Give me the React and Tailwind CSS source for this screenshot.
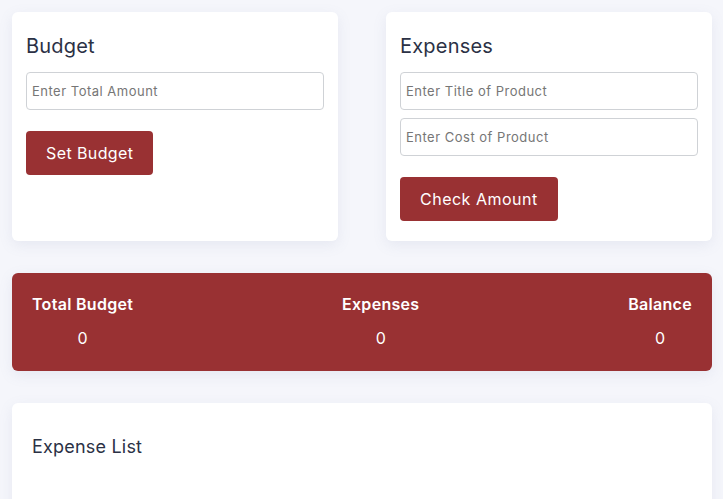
export default function App() {
  const font = { fontFamily: '"Inter", "Noto Sans", sans-serif' };
  const inputCls =
    "block h-[38px] w-full rounded-[4px] border border-[#cfd2d6] px-[5px] text-[13px] tracking-[0.5px] text-[#333] placeholder:text-[#767676] outline-none";
  return (
    <div className="h-[499px] overflow-hidden bg-[#f5f6fb] pl-3 pr-[11px] pt-3" style={font}>
      <div className="grid grid-cols-2 gap-12">
        <div className="rounded-md bg-white px-[14px] pt-5 pb-5 shadow-[0_4px_14px_rgba(120,130,170,0.12)]">
          <h2 className="mb-3 text-[20px] leading-7 tracking-[0.2px] text-[#2b3145]">Budget</h2>
          <input className={inputCls} placeholder="Enter Total Amount" />
          <button className="mt-[21px] rounded-[4px] bg-[#993133] px-5 py-2.5 text-[16px] leading-6 tracking-[0.4px] text-white">
            Set Budget
          </button>
        </div>
        <div className="rounded-md bg-white px-[14px] pt-5 pb-5 shadow-[0_4px_14px_rgba(120,130,170,0.12)]">
          <h2 className="mb-3 text-[20px] leading-7 tracking-[0.2px] text-[#2b3145]">Expenses</h2>
          <div className="flex flex-col gap-2">
            <input className={inputCls} placeholder="Enter Title of Product" />
            <input className={inputCls} placeholder="Enter Cost of Product" />
          </div>
          <button className="mt-[21px] rounded-[4px] bg-[#993133] px-5 py-2.5 text-[16px] leading-6 tracking-[0.5px] text-white">
            Check Amount
          </button>
        </div>
      </div>

      <div className="mt-8 flex h-[98px] items-start justify-between rounded-md bg-[#993133] px-5 pt-[19px] text-white shadow-[0_4px_14px_rgba(120,130,170,0.12)]">
        <div className="flex flex-col items-center">
          <div className="text-[16px] font-semibold leading-6 tracking-[0.3px]">Total Budget</div>
          <div className="mt-[10px] text-[16px] leading-6">0</div>
        </div>
        <div className="flex flex-col items-center">
          <div className="text-[16px] font-semibold leading-6 tracking-[0.3px]">Expenses</div>
          <div className="mt-[10px] text-[16px] leading-6">0</div>
        </div>
        <div className="flex flex-col items-center">
          <div className="text-[16px] font-semibold leading-6 tracking-[0.3px]">Balance</div>
          <div className="mt-[10px] text-[16px] leading-6">0</div>
        </div>
      </div>

      <div className="mt-8 h-[150px] rounded-md bg-white px-5 pt-[30px] shadow-[0_4px_14px_rgba(120,130,170,0.12)]">
        <h2 className="text-[18px] leading-7 tracking-[0.2px] text-[#2b3145]">Expense List</h2>
      </div>
    </div>
  );
}
